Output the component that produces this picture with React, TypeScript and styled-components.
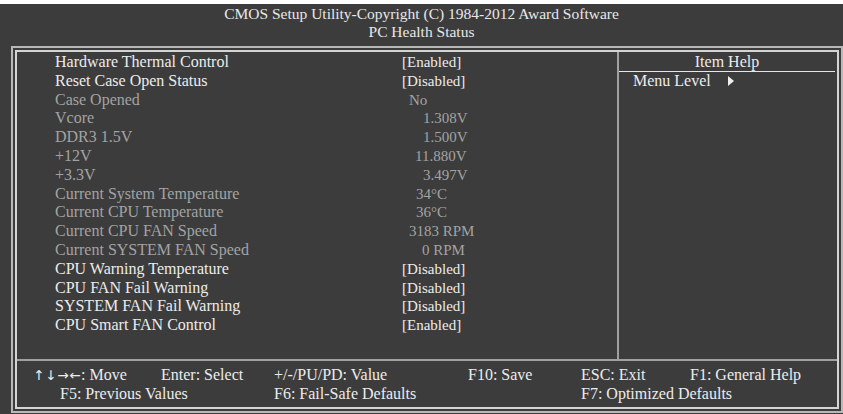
import React from "react";
import styled, { createGlobalStyle } from "styled-components";

const GlobalStyle = createGlobalStyle`
  html, body {
    margin: 0;
    padding: 0;
    background: #3c3c3c;
  }
  body {
    font-family: "Liberation Serif", "Times New Roman", serif;
  }
`;

type Item = {
	label: string;
	value: string;
	active: boolean;
	indent: number;
};

const items: Item[] = [
	{ label: "Hardware Thermal Control", value: "[Enabled]", active: true, indent: 0 },
	{ label: "Reset Case Open Status", value: "[Disabled]", active: true, indent: 0 },
	{ label: "Case Opened", value: "No", active: false, indent: 7 },
	{ label: "Vcore", value: "1.308V", active: false, indent: 21 },
	{ label: "DDR3 1.5V", value: "1.500V", active: false, indent: 21 },
	{ label: "+12V", value: "11.880V", active: false, indent: 13 },
	{ label: "+3.3V", value: "3.497V", active: false, indent: 21 },
	{ label: "Current System Temperature", value: "34°C", active: false, indent: 14 },
	{ label: "Current CPU Temperature", value: "36°C", active: false, indent: 14 },
	{ label: "Current CPU FAN Speed", value: "3183 RPM", active: false, indent: 7 },
	{ label: "Current SYSTEM FAN Speed", value: "0 RPM", active: false, indent: 20 },
	{ label: "CPU Warning Temperature", value: "[Disabled]", active: true, indent: 0 },
	{ label: "CPU FAN Fail Warning", value: "[Disabled]", active: true, indent: 0 },
	{ label: "SYSTEM FAN Fail Warning", value: "[Disabled]", active: true, indent: 0 },
	{ label: "CPU Smart FAN Control", value: "[Enabled]", active: true, indent: 0 },
];

const App = () => {
	return (
		<Screen>
			<GlobalStyle />
			<TopStrip />
			<Header>
				<div>CMOS Setup Utility-Copyright (C) 1984-2012 Award Software</div>
				<div>PC Health Status</div>
			</Header>
			<OuterFrame>
				<InnerFrame>
					<Main>
						<ItemList>
							{items.map((item) => (
								<Row key={item.label} active={item.active}>
									<Label>{item.label}</Label>
									<Value indent={item.indent}>{item.value}</Value>
								</Row>
							))}
						</ItemList>
						<HelpPanel>
							<HelpTitle>Item Help</HelpTitle>
							<MenuLevel>
								Menu Level
								<Arrow viewBox="0 0 6 10">
									<path d="M0 0 L6 5 L0 10 Z" fill="#f0f0f0" />
								</Arrow>
							</MenuLevel>
						</HelpPanel>
					</Main>
					<Footer>
						<Key>
							{["↑", "↓", "→", "←"].map((a) => (
								<ArrowGlyph key={a}>{a}</ArrowGlyph>
							))}
							: Move
						</Key>
						<Key>Enter: Select</Key>
						<Key>+/-/PU/PD: Value</Key>
						<Key>F10: Save</Key>
						<Key>ESC: Exit</Key>
						<Key>F1: General Help</Key>
						<Key span={2} indent={27}>F5: Previous Values</Key>
						<Key span={2}>F6: Fail-Safe Defaults</Key>
						<Key span={2}>F7: Optimized Defaults</Key>
					</Footer>
				</InnerFrame>
			</OuterFrame>
		</Screen>
	);
};

const Screen = styled.div`
  width: 843px;
  height: 414px;
  background: #3c3c3c;
  color: #ececec;
  font-size: 16px;
  overflow: hidden;
`;

const TopStrip = styled.div`
  height: 4px;
  background: #ffffff;
`;

const Header = styled.div`
  height: 42px;
  display: flex;
  flex-direction: column;
  align-items: center;
  font-size: 15.5px;
  line-height: 18px;
  padding-top: 1px;
  box-sizing: border-box;
  color: #e8e8e8;
`;

const OuterFrame = styled.div`
  margin-left: 11px;
  width: 832px;
  height: 367px;
  box-sizing: border-box;
  border: 2px solid #b8b8b8;
  padding: 2px;
`;

const InnerFrame = styled.div`
  height: 100%;
  box-sizing: border-box;
  border: 2px solid #d4d4d4;
  display: flex;
  flex-direction: column;
`;

const Main = styled.div`
  height: 307px;
  display: flex;
  border-bottom: 2px solid #a0a0a0;
`;

const ItemList = styled.div`
  width: 602px;
  border-right: 2px solid #a0a0a0;
  padding: 1px 0 0 38px;
  box-sizing: border-box;
`;

const Row = styled.div<{ active: boolean }>`
  display: grid;
  grid-template-columns: 347px 1fr;
  height: 18.8px;
  line-height: 18.8px;
  color: ${(p) => (p.active ? "#ececec" : "#a3a3a3")};
`;

const Label = styled.span`
  white-space: nowrap;
`;

const Value = styled.span<{ indent: number }>`
  padding-left: ${(p) => p.indent}px;
  font-size: 15px;
  white-space: nowrap;
`;

const HelpPanel = styled.div`
  flex: 1;
  display: flex;
  flex-direction: column;
`;

const HelpTitle = styled.div`
  height: 19px;
  line-height: 19px;
  text-align: center;
  border-bottom: 1px solid #e6e6e6;
  margin-right: 2px;
`;

const MenuLevel = styled.div`
  display: flex;
  align-items: center;
  padding-left: 14px;
  line-height: 18px;
`;

const Arrow = styled.svg`
  width: 6px;
  height: 10px;
  margin-left: 17px;
`;

const Footer = styled.div`
  flex: 1;
  display: grid;
  grid-template-columns: 128px 113px 194px 113px 109px 1fr;
  grid-auto-rows: 19px;
  align-content: center;
  padding-left: 16px;
  line-height: 19px;
`;

const Key = styled.div<{ span?: number; indent?: number }>`
  grid-column: span ${(p) => p.span ?? 1};
  padding-left: ${(p) => p.indent ?? 0}px;
  white-space: nowrap;
`;

const ArrowGlyph = styled.span`
  display: inline-block;
  width: 12px;
  text-align: center;
  font-family: "DejaVu Sans", sans-serif;
  font-size: 13.5px;
`;

export default App;
